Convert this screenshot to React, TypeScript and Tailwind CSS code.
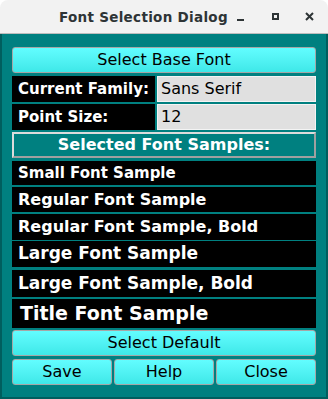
import React from 'react'

const font = { fontFamily: '"DejaVu Sans", Verdana, sans-serif' }

function CyanButton({ label, className = '' }: { label: string; className?: string }) {
  return (
    <div
      className={
        'flex h-[26px] items-center justify-center rounded-[3px] border border-[#a6a6a6] bg-gradient-to-b from-[#62fdff] to-[#3ee8e8] text-[16px] text-black ' +
        className
      }
    >
      {label}
    </div>
  )
}

function SampleRow({ label, size, h, mt }: { label: string; size: string; h: string; mt: string }) {
  return (
    <div className={`flex items-center bg-black pl-[6px] font-bold text-white ${size} ${h} ${mt}`}>
      {label}
    </div>
  )
}

export default function App() {
  return (
    <div className="h-[399px] w-[328px] bg-white" style={font}>
      <div className="flex h-full flex-col overflow-hidden rounded-t-[8px]">
        {/* title bar */}
        <div className="relative flex h-[34px] shrink-0 items-center border-b border-[#bdbdbd] bg-[#f2f2f2]">
          <span className="absolute left-[59px] top-[7px] text-[13.5px] font-bold tracking-[0.3px] text-[#2e3436]">
            Font Selection Dialog
          </span>
          <span className="absolute left-[237px] top-[19px] h-[2px] w-[7px] bg-[#2e3436]" />
          <span className="absolute left-[272px] top-[13px] h-[7px] w-[7px] border-2 border-[#2e3436]" />
          <svg className="absolute left-[305px] top-[12px]" width="9" height="9" viewBox="0 0 9 9">
            <path d="M1 1 L8 8 M8 1 L1 8" stroke="#2e3436" strokeWidth="2" />
          </svg>
        </div>

        {/* body */}
        <div className="flex flex-1 flex-col border-x-2 border-b-2 border-[#005e5e] bg-[#008080] px-[10px] pt-[13px]">
          <CyanButton label="Select Base Font" />

          <div className="mt-[3px] flex h-[26px] gap-[2px]">
            <div className="flex w-[143px] items-center bg-black pl-[6px] text-[15px] font-bold text-white">
              Current Family:
            </div>
            <div className="flex flex-1 items-center border border-[#f4f4f4] bg-[#e0e0e0] pl-[3px] text-[16px] text-black">
              Sans Serif
            </div>
          </div>

          <div className="mt-[2px] flex h-[26px] gap-[2px]">
            <div className="flex w-[143px] items-center bg-black pl-[6px] text-[15px] font-bold text-white">
              Point Size:
            </div>
            <div className="flex flex-1 items-center border border-[#f4f4f4] bg-[#e0e0e0] pl-[3px] text-[16px] text-black">
              12
            </div>
          </div>

          <div className="mt-[2px] flex h-[26px] items-center justify-center border-2 border-t-[#dcdcdc] border-l-[#dcdcdc] border-b-[#a0a0a0] border-r-[#a0a0a0] bg-[#008080] text-[16px] font-bold text-white">
            Selected Font Samples:
          </div>

          <SampleRow label="Small Font Sample" size="text-[15px]" h="h-[24px]" mt="mt-[3px]" />
          <SampleRow label="Regular Font Sample" size="text-[16px]" h="h-[25px]" mt="mt-[2px]" />
          <SampleRow label="Regular Font Sample, Bold" size="text-[16px]" h="h-[26px]" mt="mt-[2px]" />
          <SampleRow label="Large Font Sample" size="text-[17px]" h="h-[26px]" mt="mt-[1px]" />
          <SampleRow label="Large Font Sample, Bold" size="text-[17px]" h="h-[27px]" mt="mt-[3px]" />
          <SampleRow label="Title Font Sample" size="text-[19px] pl-[8px]" h="h-[29px]" mt="mt-[2px]" />

          <CyanButton label="Select Default" className="mt-[2px]" />

          <div className="mt-[3px] flex gap-[2px]">
            <CyanButton label="Save" className="flex-1" />
            <CyanButton label="Help" className="flex-1" />
            <CyanButton label="Close" className="flex-1" />
          </div>
        </div>
      </div>
    </div>
  )
}
